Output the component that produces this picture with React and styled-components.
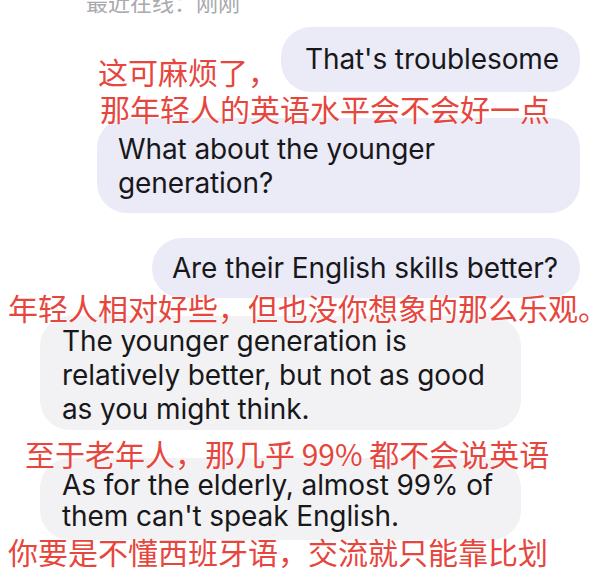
import React from "react";
import styled, { createGlobalStyle } from "styled-components";

const Global = createGlobalStyle`
  html, body { margin: 0; padding: 0; background: #ffffff; }
  body { width: 600px; height: 572px; overflow: hidden; }
`;

const Page = styled.div`
  width: 600px;
  height: 572px;
  overflow: hidden;
  display: flex;
  flex-direction: column;
  padding: 0 20px 0 0;
  box-sizing: border-box;
  font-family: Inter, "Noto Sans", sans-serif;
`;

const Status = styled.div`
  margin: -12px 0 0 86px;
  font-family: "Noto Sans CJK SC", sans-serif;
  font-size: 22px;
  line-height: 26px;
  color: #a9a9ad;
`;

const Row = styled.div`
  display: flex;
  align-items: flex-end;
  justify-content: ${(p) => (p.$side === "left" ? "flex-start" : "flex-end")};
  margin-top: ${(p) => p.$mt || 0}px;
  padding-left: ${(p) => p.$pl || 0}px;
`;

const Bubble = styled.div`
  background: ${(p) => (p.$mine ? "#ebeaf7" : "#f2f2f4")};
  color: #18181b;
  font-size: 28px;
  line-height: ${(p) => p.$lh || 34}px;
  border-radius: 30px;
  padding: ${(p) => p.$pad || "15px 22px"};
  width: ${(p) => (p.$w ? p.$w + "px" : "auto")};
  box-sizing: border-box;
  letter-spacing: -0.1px;
  white-space: nowrap;
`;

const Note = styled.div`
  position: relative;
  z-index: 1;
  font-family: "Noto Sans CJK SC", sans-serif;
  font-size: 30px;
  line-height: 34px;
  color: #e6463d;
  white-space: nowrap;
  margin: ${(p) => p.$m || "0"};
  text-shadow: 0 0 2px #fff, 0 0 2px #fff, 0 0 1px #fff;
`;

export default function App() {
  return (
    <>
      <Global />
      <Page>
        <Status>最近在线：刚刚</Status>
        <Row $mt={13}>
          <Note $m="0 3px 4px 0">这可麻烦了，</Note>
          <Bubble $mine $pad="15px 21px 16px 24px">That's troublesome</Bubble>
        </Row>
        <Note $m="-1px 0 0 100px">那年轻人的英语水平会不会好一点</Note>
        <Row $mt={-7}>
          <Bubble $mine $w={483} $pad="14px 22px 13px 21px">
            What about the younger
            <br />
            generation?
          </Bubble>
        </Row>
        <Row $mt={25}>
          <Bubble $mine $pad="13px 22px 13px 20px">
            Are their English skills better?
          </Bubble>
        </Row>
        <Note $m="-8px 0 0 8px">年轻人相对好些，但也没你想象的那么乐观。</Note>
        <Row $side="left" $pl={40} $mt={-8}>
          <Bubble $w={481} $pad="8px 20px 4px 22px">
            The younger generation is
            <br />
            relatively better, but not as good
            <br />
            as you might think.
          </Bubble>
        </Row>
        <Note $m="6px 0 0 25px">至于老年人，那几乎 99% 都不会说英语</Note>
        <Row $side="left" $pl={40} $mt={-12}>
          <Bubble $w={481} $lh={31} $pad="12px 20px 8px 22px">
            As for the elderly, almost 99% of
            <br />
            them can't speak English.
          </Bubble>
        </Row>
        <Note $m="-6px 0 0 8px">你要是不懂西班牙语，交流就只能靠比划</Note>
      </Page>
    </>
  );
}
